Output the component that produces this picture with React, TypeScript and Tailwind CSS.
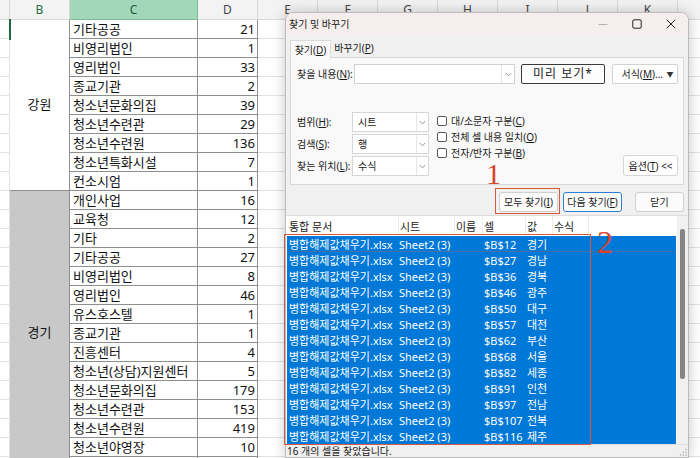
import React from "react";

const cItems = [
  "기타공공", "비영리법인", "영리법인", "종교기관", "청소년문화의집", "청소년수련관", "청소년수련원", "청소년특화시설", "컨소시엄",
  "개인사업", "교육청", "기타", "기타공공", "비영리법인", "영리법인", "유스호스텔", "종교기관", "진흥센터", "청소년(상담)지원센터",
  "청소년문화의집", "청소년수련관", "청소년수련원", "청소년야영장", "",
];
const dItems = ["21", "1", "33", "2", "39", "29", "136", "7", "1", "16", "12", "2", "27", "8", "46", "1", "1", "4", "5", "179", "153", "419", "10", ""];

const results: [string, string][] = [
  ["$B$12", "경기"], ["$B$27", "경남"], ["$B$36", "경북"], ["$B$46", "광주"], ["$B$50", "대구"], ["$B$57", "대전"],
  ["$B$62", "부산"], ["$B$68", "서울"], ["$B$82", "세종"], ["$B$91", "인천"], ["$B$97", "전남"], ["$B$107", "전북"], ["$B$116", "제주"],
];

const rowIdx = Array.from({ length: 24 }, (_, i) => i);

function EmptyCol({ label, wide }: { label: string; wide?: boolean }) {
  return (
    <div className={wide ? "flex flex-col shrink-0 w-[60px]" : "flex flex-col shrink-0 w-[10px]"}>
      <div className="h-[20px] bg-[#f3f3f3] border-r border-b border-[#d8d8d8] text-center text-[12px] leading-[19px] text-[#444]">
        {label}
      </div>
      {rowIdx.map((i) => (
        <div key={i} className="h-[19px] bg-white border-r border-b border-[#e2e2e2]" />
      ))}
    </div>
  );
}

function Chevron() {
  return (
    <svg width="7" height="5" viewBox="0 0 7 5">
      <path d="M0.8 1 L3.5 3.8 L6.2 1" fill="none" stroke="#8a8a8a" strokeWidth="0.9" />
    </svg>
  );
}

function Select({ value }: { value: string }) {
  return (
    <div className="w-[77px] h-[20px] bg-white border border-[#d6d6d6] flex items-center">
      <span className="flex-1 pl-[5px] text-[10px] leading-none">{value}</span>
      <span className="w-[12px] h-full border-l border-[#e6e6e6] flex items-center justify-center">
        <Chevron />
      </span>
    </div>
  );
}

function Check({ children }: { children: React.ReactNode }) {
  return (
    <div className="h-[16px] flex items-center">
      <span className="w-[10px] h-[10px] border border-[#5a5a5a] rounded-[2px] bg-white shrink-0" />
      <span className="ml-[4px] text-[10px] leading-none whitespace-nowrap">{children}</span>
    </div>
  );
}

function Btn({ children, cls }: { children: React.ReactNode; cls: string }) {
  return (
    <div className={"h-[20px] flex items-center justify-center text-[10px] leading-none rounded-[3px] " + cls}>{children}</div>
  );
}

function Dialog() {
  return (
    <div className="absolute left-[285px] top-[12px] w-[404px] h-[446px] bg-[#f0f0f0] border border-[#bcbcbc] rounded-t-[8px] shadow-[0_0_14px_rgba(0,0,0,0.22)] flex flex-col text-[#1a1a1a]">
      {/* title bar */}
      <div className="h-[22px] bg-[#f6eeec] rounded-t-[7px] flex items-center shrink-0">
        <span className="pl-[3px] text-[10px] leading-none">찾기 및 바꾸기</span>
        <div className="ml-auto flex h-full">
          <div className="w-[34px] flex items-center justify-center">
            <svg width="10" height="10" viewBox="0 0 10 10">
              <path d="M0.5 5.5 H9.5" stroke="#b0b0b0" strokeWidth="1" />
            </svg>
          </div>
          <div className="w-[34px] flex items-center justify-center">
            <svg width="10" height="10" viewBox="0 0 10 10">
              <rect x="0.8" y="0.8" width="8.4" height="8.4" rx="1.2" fill="none" stroke="#222" strokeWidth="1" />
            </svg>
          </div>
          <div className="w-[34px] flex items-center justify-center">
            <svg width="10" height="10" viewBox="0 0 10 10">
              <path d="M0.8 0.8 L9.2 9.2 M9.2 0.8 L0.8 9.2" stroke="#222" strokeWidth="1" />
            </svg>
          </div>
        </div>
      </div>

      {/* tabs */}
      <div className="h-[22px] flex items-end pl-[4px] shrink-0 relative z-10">
        <div className="w-[41px] h-[18px] bg-[#f9f9f9] border-t border-l border-r border-[#d9d9d9] -mb-px flex items-center justify-center text-[10px] leading-none">
          찾기(<u>D</u>)
        </div>
        <div className="w-[46px] h-[18px] flex items-center justify-center text-[10px] leading-none">
          바꾸기(<u>P</u>)
        </div>
      </div>

      {/* panel */}
      <div className="mx-[4px] h-[128px] bg-[#f9f9f9] border border-[#d9d9d9] shrink-0 flex flex-col">
        <div className="pt-[6px] flex items-center">
          <span className="pl-[6px] w-[63px] text-[10px] leading-none whitespace-nowrap">
            찾을 내용(<u>N</u>):
          </span>
          <div className="w-[161px] h-[20px] bg-white border border-[#d0d0d0] flex items-center justify-end">
            <span className="w-[13px] h-full border-l border-[#e6e6e6] flex items-center justify-center">
              <Chevron />
            </span>
          </div>
          <div className="ml-[6px] w-[84px] h-[20px] border border-[#3a3a3a] rounded-[2px] bg-[#fdfdfd] flex items-center justify-center text-[12px] leading-none tracking-[1px]">
            미리 보기*
          </div>
          <div className="ml-[7px] w-[66px] h-[20px] border border-[#d2d2d2] rounded-[2px] bg-white flex items-center justify-end text-[10px] leading-none">
            <span>
              서식(<u>M</u>)...
            </span>
            <span className="w-[14px] text-center text-[7px] text-[#333]">▼</span>
          </div>
        </div>

        <div className="mt-[28px] flex">
          <div className="flex flex-col gap-[2px] pl-[6px]">
            <div className="flex items-center">
              <span className="w-[55px] text-[10px] leading-none">
                범위(<u>H</u>):
              </span>
              <Select value="시트" />
            </div>
            <div className="flex items-center">
              <span className="w-[55px] text-[10px] leading-none">
                검색(<u>S</u>):
              </span>
              <Select value="행" />
            </div>
            <div className="flex items-center">
              <span className="w-[55px] text-[10px] leading-none whitespace-nowrap">
                찾는 위치(<u>L</u>):
              </span>
              <Select value="수식" />
            </div>
          </div>
          <div className="ml-[8px] pt-[1px] flex flex-col">
            <Check>
              대/소문자 구분(<u>C</u>)
            </Check>
            <Check>
              전체 셀 내용 일치(<u>O</u>)
            </Check>
            <Check>
              전자/반자 구분(<u>B</u>)
            </Check>
          </div>
          <div className="flex-1 flex justify-end items-end pr-[5px]">
            <div className="w-[55px] h-[21px] border border-[#d6d6d6] rounded-[3px] bg-white flex items-center justify-center text-[10px] leading-none">
              옵션(<u>T</u>) &lt;&lt;
            </div>
          </div>
        </div>
      </div>

      {/* buttons */}
      <div className="mt-[7px] h-[20px] flex justify-end pr-[4px] shrink-0">
        <div className="relative">
          <Btn cls="w-[59px] bg-[#fbfbfb] border border-[#d0d0d0]">
            모두 찾기(<u>I</u>)
          </Btn>
          <span className="absolute -left-[4px] -top-[4px] -right-[2px] -bottom-[2px] border-[1.5px] border-[#d9573c]" />
        </div>
        <div className="ml-[5px]">
          <Btn cls="w-[59px] bg-[#fbfbfb] border border-[#2f7fd0]">
            다음 찾기(<u>F</u>)
          </Btn>
        </div>
        <div className="ml-[13px]">
          <Btn cls="w-[49px] bg-[#fbfbfb] border border-[#d0d0d0]">닫기</Btn>
        </div>
      </div>

      {/* list */}
      <div className="mt-[3px] h-[230px] bg-white border-y border-[#e4dcda] flex shrink-0">
        <div className="flex-1 flex flex-col">
          <div className="h-[20px] flex items-center text-[11px] leading-none text-[#222] pl-[3px]">
            <span className="w-[110px] h-full flex items-center border-r border-[#ececec]">통합 문서</span>
            <span className="w-[56px] h-full flex items-center pl-[1px] border-r border-[#ececec]">시트</span>
            <span className="w-[28px] h-full flex items-center pl-[1px] border-r border-[#ececec]">이름</span>
            <span className="w-[43px] h-full flex items-center pl-[1px] border-r border-[#ececec]">셀</span>
            <span className="w-[27px] h-full flex items-center pl-[1px] border-r border-[#ececec]">값</span>
            <span className="w-[36px] h-full flex items-center pl-[1px] border-r border-[#ececec]">수식</span>
          </div>
          <div className="ml-[1px] flex flex-col">
            {results.map(([cell, val], i) => (
              <div
                key={cell}
                className={
                  i === 0
                    ? "h-[16px] bg-[#0078d7] text-white flex items-center text-[11px] leading-none pl-[2px] shadow-[inset_0_-1px_0_#3d6fa8]"
                    : "h-[16px] bg-[#0078d7] text-white flex items-center text-[11px] leading-none pl-[2px]"
                }
              >
                <span className="w-[110px] whitespace-nowrap">병합해제값채우기.xlsx</span>
                <span className="w-[85px] whitespace-nowrap">Sheet2 (3)</span>
                <span className="w-[43px] whitespace-nowrap">{cell}</span>
                <span className="whitespace-nowrap">{val}</span>
              </div>
            ))}
          </div>
        </div>
        <div className="w-[11px] ml-[1px] bg-[#f0f0f0] relative">
          <div className="absolute left-[3px] top-[13px] w-[5px] h-[150px] rounded-[2px] bg-[#858585]" />
        </div>
      </div>

      {/* status */}
      <div className="h-[12px] flex items-center pl-[1px] text-[10px] leading-none relative">
        16 개의 셀을 찾았습니다.
        <svg className="absolute right-[1px] bottom-[1px]" width="8" height="8" viewBox="0 0 8 8">
          <circle cx="7" cy="1.5" r="0.7" fill="#999" />
          <circle cx="7" cy="4.2" r="0.7" fill="#999" />
          <circle cx="4.2" cy="4.2" r="0.7" fill="#999" />
          <circle cx="7" cy="7" r="0.7" fill="#999" />
          <circle cx="4.2" cy="7" r="0.7" fill="#999" />
          <circle cx="1.5" cy="7" r="0.7" fill="#999" />
        </svg>
      </div>

      {/* annotations */}
      <span className="absolute left-[200px] top-[146px] text-[30px] leading-none text-[#d6452b] font-['Liberation_Serif',serif]">1</span>
      <span className="absolute -left-[2px] top-[221px] w-[307px] h-[211px] border-[1.5px] border-[#d9573c]" />
      <span className="absolute left-[311px] top-[213px] text-[32px] leading-none text-[#d6452b] font-['Liberation_Serif',serif]">2</span>
    </div>
  );
}

export default function App() {
  return (
    <div className="relative w-[700px] h-[458px] overflow-hidden bg-white font-['Noto_Sans','Noto_Sans_CJK_KR',sans-serif]">
      <div className="flex">
        <EmptyCol label="" />
        {/* B */}
        <div className="flex flex-col shrink-0 w-[60px]">
          <div className="h-[20px] bg-[#f3f3f3] border-r border-b border-[#d8d8d8] text-center text-[12px] leading-[19px] text-[#1f6e43]">B</div>
          <div className="h-[171px] bg-white border-r border-b border-[#8f8f8f] flex items-center justify-center text-[13px] text-[#111]">강원</div>
          <div className="h-[285px] bg-[#c8c8c8] border-r border-b border-[#8f8f8f] flex items-center justify-center text-[13px] text-[#111]">경기</div>
        </div>
        {/* C */}
        <div className="flex flex-col shrink-0 w-[128px]">
          <div className="h-[20px] bg-[#a2d7b9] border-r border-b border-[#79bb95] text-center text-[12px] leading-[19px] text-[#1c5a38]">C</div>
          {cItems.map((t, i) => (
            <div key={i} className="h-[19px] bg-white border-r border-b border-[#8f8f8f] pl-[3px] text-[13px] leading-[18px] text-[#111] whitespace-nowrap">
              {t}
            </div>
          ))}
        </div>
        {/* D */}
        <div className="flex flex-col shrink-0 w-[60px]">
          <div className="h-[20px] bg-[#f3f3f3] border-r border-b border-[#d8d8d8] text-center text-[12px] leading-[19px] text-[#444]">D</div>
          {dItems.map((t, i) => (
            <div key={i} className="h-[19px] bg-white border-r border-b border-[#8f8f8f] pr-[2px] text-right text-[13px] leading-[18px] text-[#111]">
              {t}
            </div>
          ))}
        </div>
        <EmptyCol label="E" wide />
        <EmptyCol label="F" wide />
        <EmptyCol label="G" wide />
        <EmptyCol label="H" wide />
        <EmptyCol label="I" wide />
        <EmptyCol label="J" wide />
        <EmptyCol label="K" wide />
        <EmptyCol label="" wide />
      </div>
      <span className="absolute left-[9px] top-[19px] w-[2px] h-[21px] bg-[#1e6b41]" />
      <Dialog />
    </div>
  );
}
